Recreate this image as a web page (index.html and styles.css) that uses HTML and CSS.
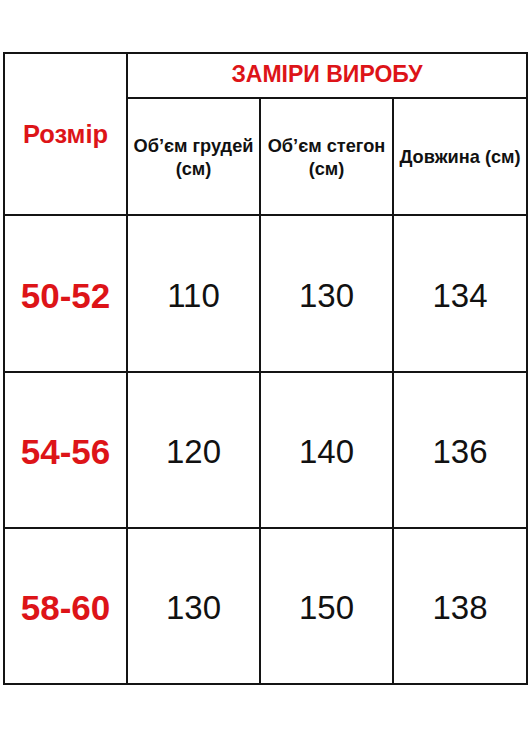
FILE: index.html
```html
<!DOCTYPE html>
<html lang="uk">
<head>
<meta charset="utf-8">
<title>Заміри виробу</title>
<link rel="stylesheet" href="styles.css">
</head>
<body>
<div class="page">
  <div class="table">
    <div class="cell size-head">Розмір</div>
    <div class="cell group-head">ЗАМІРИ ВИРОБУ</div>
    <div class="cell sub-head">Об’єм грудей<br>(см)</div>
    <div class="cell sub-head">Об’єм стегон<br>(см)</div>
    <div class="cell sub-head">Довжина (см)</div>

    <div class="cell size">50-52</div>
    <div class="cell num">110</div>
    <div class="cell num">130</div>
    <div class="cell num">134</div>

    <div class="cell size">54-56</div>
    <div class="cell num">120</div>
    <div class="cell num">140</div>
    <div class="cell num">136</div>

    <div class="cell size">58-60</div>
    <div class="cell num">130</div>
    <div class="cell num">150</div>
    <div class="cell num">138</div>
  </div>
</div>
</body>
</html>
```

FILE: styles.css
```css
html, body {
  margin: 0;
  padding: 0;
  background: #ffffff;
}

body {
  width: 529px;
  height: 736px;
  overflow: hidden;
  font-family: "Liberation Sans", Arial, sans-serif;
}

.page {
  padding: 52px 0 0 3px;
}

.table {
  display: grid;
  grid-template-columns: 121px 131px 131px 132px;
  grid-template-rows: 43px 115px 155px 154px 154px;
  gap: 2px;
  padding: 2px;
  background: #141414;
  width: max-content;
}

.cell {
  background: #ffffff;
  display: flex;
  align-items: center;
  justify-content: center;
  text-align: center;
}

.size-head {
  grid-row: 1 / 3;
  grid-column: 1;
  color: #dd1418;
  font-weight: bold;
  font-size: 25.5px;
}

.group-head {
  grid-row: 1;
  grid-column: 2 / 5;
  color: #dd1418;
  font-weight: bold;
  font-size: 23px;
  padding-bottom: 2px;
}

.sub-head {
  color: #111111;
  font-weight: bold;
  font-size: 18.2px;
  line-height: 23px;
  padding-top: 2px;
}

.size {
  color: #dd1418;
  font-weight: bold;
  font-size: 35px;
  padding-top: 4px;
}

.num {
  color: #111111;
  font-size: 33px;
  padding-top: 4px;
}
```
